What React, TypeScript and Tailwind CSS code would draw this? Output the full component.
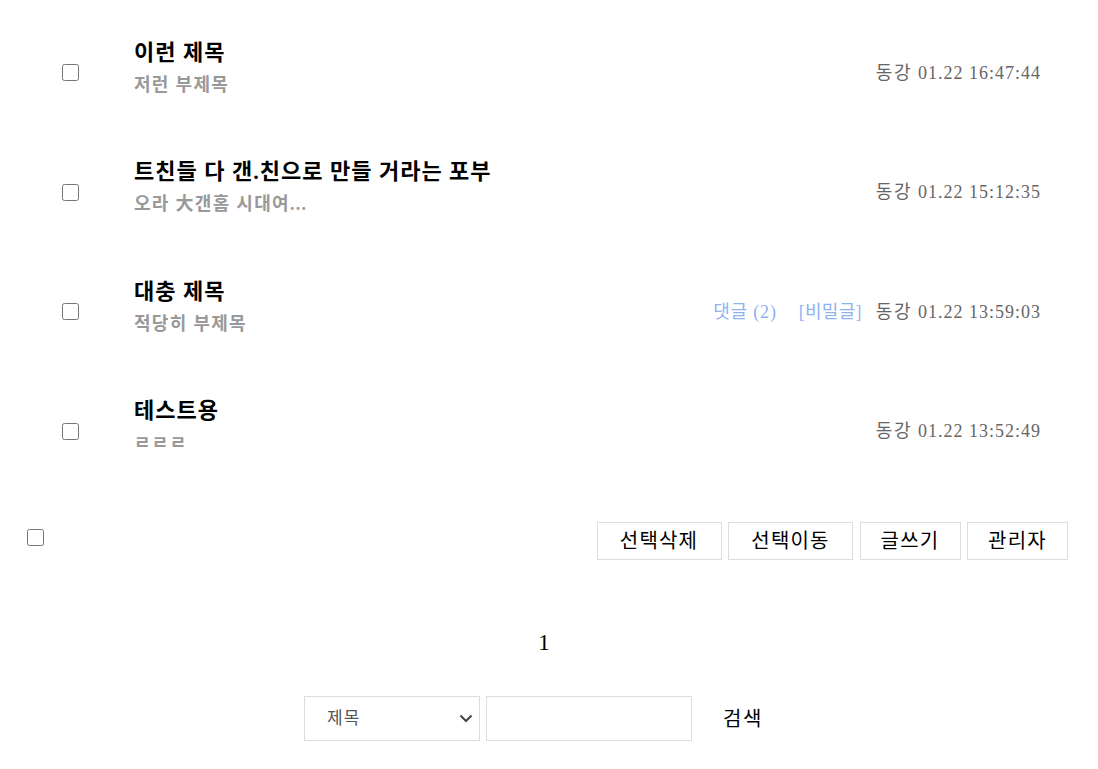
import React from "react";

type Post = {
  title: string;
  sub: string;
  comments?: number;
  secret?: boolean;
  author: string;
  date: string;
};

const posts: Post[] = [
  { title: "이런 제목", sub: "저런 부제목", author: "동강", date: "01.22 16:47:44" },
  {
    title: "트친들 다 갠.친으로 만들 거라는 포부",
    sub: "오라 大갠홈 시대여...",
    author: "동강",
    date: "01.22 15:12:35",
  },
  {
    title: "대충 제목",
    sub: "적당히 부제목",
    comments: 2,
    secret: true,
    author: "동강",
    date: "01.22 13:59:03",
  },
  { title: "테스트용", sub: "ㄹㄹㄹ", author: "동강", date: "01.22 13:52:49" },
];

const actions = [
  { label: "선택삭제", w: "w-[125px]" },
  { label: "선택이동", w: "w-[125px]" },
  { label: "글쓰기", w: "w-[101px]" },
  { label: "관리자", w: "w-[101px]" },
];

function Check({ className = "" }: { className?: string }) {
  return <input type="checkbox" className={`m-0 w-[17px] h-[17px] shrink-0 ${className}`} />;
}

function PostRow({ post }: { post: Post }) {
  return (
    <li className="flex items-center h-[119.5px] pl-[35px] pr-[27px]">
      <Check />
      <div className="ml-[55px] mb-[8px] flex-1 min-w-0">
        <p className="text-[22px] leading-[32px] font-bold text-black tracking-[1px]">
          {post.title}
        </p>
        <p className="text-[18px] leading-[32px] font-bold text-[#999] tracking-[1.3px]">
          {post.sub}
        </p>
      </div>
      <div className="flex items-center text-[18px] leading-[26px]">
        {post.comments !== undefined && (
          <span className="text-[#8fb3f0] mr-[22px] tracking-[0.8px]">댓글 ({post.comments})</span>
        )}
        {post.secret && (
          <span className="text-[#8fb3f0] mr-[14px] tracking-[0.3px]">[비밀글]</span>
        )}
        <span className="text-[#666] mr-[6px] tracking-[1.5px]">{post.author}</span>
        <span className="text-[#666] tracking-[1px]">{post.date}</span>
      </div>
    </li>
  );
}

export default function App() {
  return (
    <div
      className="min-h-[769px] bg-white pl-[27px] pr-[30px] text-black"
      style={{ fontFamily: '"Liberation Serif", "Noto Sans CJK KR", serif' }}
    >
      {/* Post list */}
      <ul className="pt-[13px]">
        {posts.map((p) => (
          <PostRow key={p.date} post={p} />
        ))}
      </ul>

      {/* Actions */}
      <div className="mt-[31px] flex items-start">
        <Check className="mt-[7px]" />
        <div className="ml-auto flex gap-[6.5px] text-[20px] tracking-[1.2px]">
          {actions.map((a) => (
            <button
              key={a.label}
              className={`${a.w} h-[38px] border border-[#ddd] bg-white leading-[36px] text-center`}
            >
              {a.label}
            </button>
          ))}
        </div>
      </div>

      {/* Pagination */}
      <div className="mt-[66px] h-[34px] flex justify-center pr-[7px]">
        <span className="text-[23px] leading-[34px]">1</span>
      </div>

      {/* Search */}
      <div className="mt-[36px] flex justify-center pl-[7px]">
        <div className="flex gap-[6px]">
          <div className="w-[176px] h-[45px] border border-[#ddd] flex items-center pl-[22px] pr-[6px]">
            <span className="text-[17px] text-[#555] flex-1 tracking-[1px]">제목</span>
            <svg width="14" height="9" viewBox="0 0 14 9" fill="none">
              <path d="M1.5 1.5 L7 7 L12.5 1.5" stroke="#444" strokeWidth="2" />
            </svg>
          </div>
          <input className="w-[206px] h-[45px] border border-[#ddd] outline-none px-2" />
          <button className="w-[100px] h-[45px] text-[20px] text-left pl-[25px] tracking-[1.5px]">
            검색
          </button>
        </div>
      </div>
    </div>
  );
}
